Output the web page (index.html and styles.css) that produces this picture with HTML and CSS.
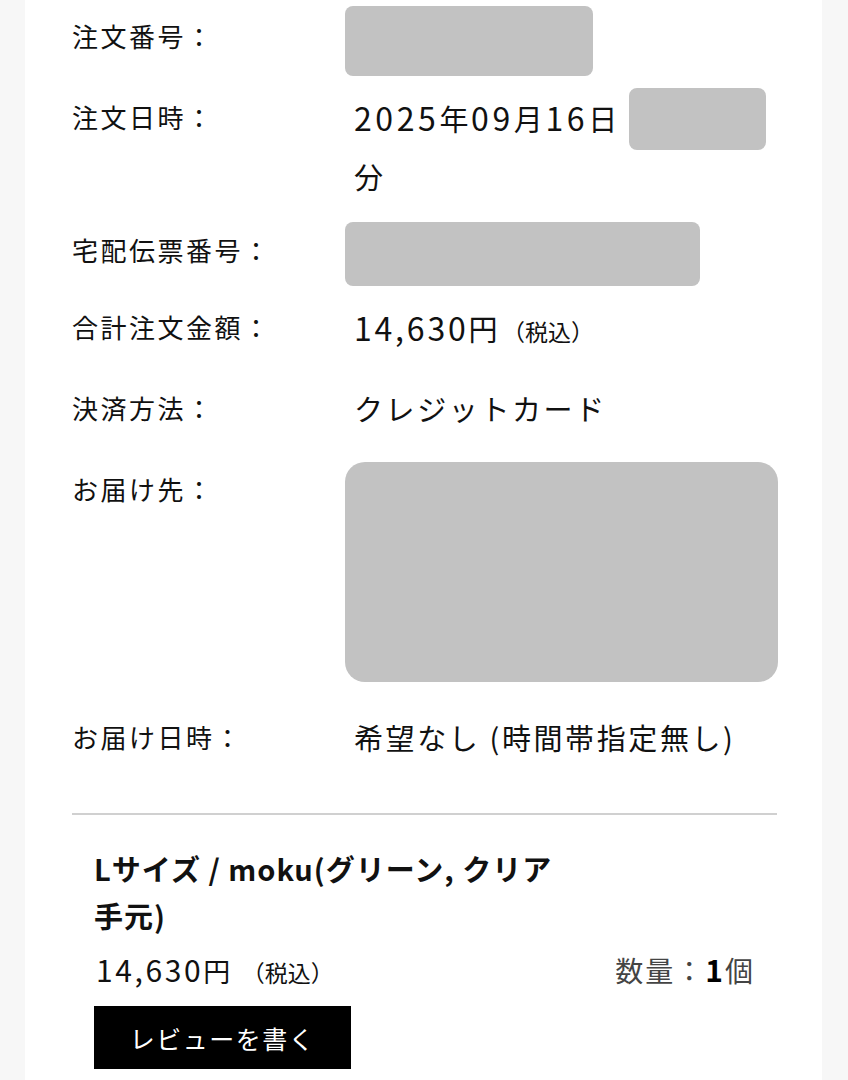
FILE: index.html
```html
<!DOCTYPE html>
<html lang="ja">
<head>
<meta charset="utf-8">
<title>注文詳細</title>
<link rel="stylesheet" href="styles.css">
</head>
<body>
<div class="panel">
  <div class="details">
    <div class="row r1">
      <div class="label">注文番号：</div>
      <div class="value"><span class="mask m1"></span></div>
    </div>
    <div class="row r2">
      <div class="label">注文日時：</div>
      <div class="value text"><span class="num">2025</span>年<span class="num">09</span>月<span class="num">16</span>日<span class="mask m2"></span><br>分</div>
    </div>
    <div class="row r3">
      <div class="label">宅配伝票番号：</div>
      <div class="value"><span class="mask m3"></span></div>
    </div>
    <div class="row r4">
      <div class="label">合計注文金額：</div>
      <div class="value text"><span class="num n2">14,630</span>円<span class="tax">（税込）</span></div>
    </div>
    <div class="row r5">
      <div class="label">決済方法：</div>
      <div class="value text">クレジットカード</div>
    </div>
    <div class="row r6">
      <div class="label">お届け先：</div>
      <div class="value"><span class="mask m4"></span></div>
    </div>
    <div class="row r7">
      <div class="label">お届け日時：</div>
      <div class="value text">希望なし (時間帯指定無し)</div>
    </div>
  </div>
  <hr class="divider">
  <div class="product">
    <div class="ptitle">Lサイズ / moku(グリーン, クリア手元)</div>
    <div class="prow">
      <div class="pprice"><span class="pnum">14,630</span>円<span class="ptax">（税込）</span></div>
      <div class="qty">数量：<b>1</b>個</div>
    </div>
    <div class="btn">レビューを書く</div>
  </div>
</div>
</body>
</html>
```
FILE: styles.css
```css
html, body {
  margin: 0;
  padding: 0;
  background: #f7f7f7;
}
body {
  font-family: "Noto Sans CJK JP", "Noto Sans", sans-serif;
  color: #111;
}
.panel {
  margin-left: 25px;
  width: 797px;
  min-height: 1080px;
  background: #fff;
  padding: 6px 0 0 47px;
  box-sizing: border-box;
}
.details {
  display: flex;
  flex-direction: column;
}
.row {
  display: grid;
  grid-template-columns: 273px 1fr;
  align-items: start;
}
.label {
  font-size: 26px;
  letter-spacing: 2.5px;
  line-height: 58px;
  height: 58px;
  white-space: nowrap;
}
.value.text {
  padding-left: 9px;
  font-size: 29px;
  letter-spacing: 2.6px;
  line-height: 58px;
}
.num {
  font-size: 32px;
  letter-spacing: 3.6px;
}
.num.n2 {
  letter-spacing: 2.8px;
}
.mask {
  display: inline-block;
  background: #c2c2c2;
  border-radius: 8px;
  vertical-align: top;
}
.m1 { width: 248px; height: 70px; }
.m2 {
  width: 137px;
  height: 62px;
  margin: 0 0 -4px 9px;
  vertical-align: top;
}
.m3 { width: 355px; height: 64px; }
.m4 { width: 433px; height: 220px; border-radius: 20px; margin-top: 2px; }
.r1 { height: 70px; }
.r1 .label { line-height: 60px; height: 60px; }
.r2 { margin-top: 12px; }
.r3 { margin-top: 17px; }
.r3 .label { line-height: 56px; }
.r4 { margin-top: 12px; }
.r5 { margin-top: 19px; }
.r6 { margin-top: 23px; }
.r7 { margin-top: 26px; }
.tax {
  font-size: 23px;
  letter-spacing: 0;
  margin-left: 2px;
}
.divider {
  border: 0;
  height: 2px;
  background: #d0d0d0;
  margin: 47px 0 0 0;
  width: 705px;
}
.product {
  padding: 30px 0 0 22px;
  width: 683px;
  box-sizing: border-box;
}
.ptitle {
  font-size: 29px;
  font-weight: 700;
  line-height: 47px;
  letter-spacing: 1px;
  width: 480px;
}
.prow {
  display: flex;
  justify-content: space-between;
  align-items: center;
  margin-top: 4px;
  height: 52px;
}
.pprice {
  font-size: 27px;
  letter-spacing: 1.5px;
  padding-left: 2px;
}
.pnum {
  font-size: 30px;
  letter-spacing: 2.6px;
}
.ptax {
  font-size: 23px;
  letter-spacing: 0;
  margin-left: 10px;
}
.qty {
  font-size: 28px;
  color: #444;
  letter-spacing: 2px;
}
.qty b {
  color: #000;
  font-weight: 700;
  font-size: 30px;
}
.btn {
  margin-top: 11px;
  width: 257px;
  height: 63px;
  background: #000;
  color: #fff;
  font-size: 25px;
  letter-spacing: 1.5px;
  display: flex;
  align-items: center;
  justify-content: center;
}
```
